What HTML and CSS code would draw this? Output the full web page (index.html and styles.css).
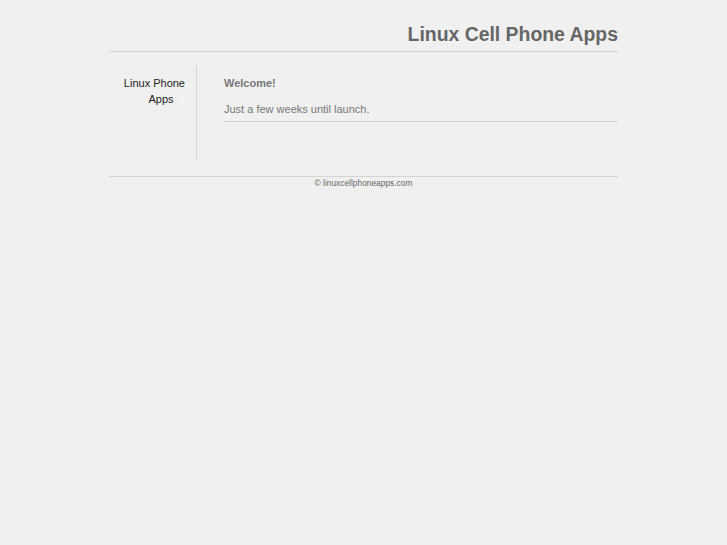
FILE: index.html
```html
<!DOCTYPE html>
<html>
<head>
<meta charset="utf-8">
<title>Linux Cell Phone Apps</title>
<link rel="stylesheet" href="styles.css">
</head>
<body>
<div class="wrap">
  <div class="header">
    <h1 class="title">Linux Cell Phone Apps</h1>
  </div>
  <div class="main">
    <div class="sidebar">
      <p class="nav">Linux Phone <span class="navline">Apps <span class="arrow">&lt;</span></span></p>
    </div>
    <div class="content">
      <h2 class="welcome">Welcome!</h2>
      <p class="intro">Just a few weeks until launch.</p>
    </div>
  </div>
  <div class="footer">© linuxcellphoneapps.com</div>
</div>
</body>
</html>
```
FILE: styles.css
```css
body {
  margin: 0;
  background: #f0f0f0;
  font-family: "Liberation Sans", Arial, sans-serif;
}
.wrap {
  width: 509px;
  margin: 0 auto;
}
.header {
  border-bottom: 1px solid #d4d4d4;
  padding-top: 22px;
  height: 29px;
  box-sizing: content-box;
}
.title {
  margin: 0;
  text-align: right;
  font-size: 19.4px;
  line-height: 24px;
  font-weight: bold;
  color: #666;
}
.main {
  display: flex;
  margin-top: 13px;
}
.sidebar {
  width: 76px;
  height: 95px;
  padding-right: 11px;
  border-right: 1px solid #d4d4d4;
  text-align: right;
}
.nav {
  margin: 10px 0 0;
  font-size: 11px;
  line-height: 16px;
  color: #222;
}
.navline {
  white-space: nowrap;
}
.arrow {
  color: #fafafa;
  font-size: 11px;
  margin-left: 2px;
}
.content {
  flex: 1;
  padding-left: 27px;
}
.welcome {
  margin: 11px 0 0;
  font-size: 11px;
  line-height: 14px;
  font-weight: bold;
  color: #777;
}
.intro {
  margin: 12px 0 0;
  padding-bottom: 5px;
  border-bottom: 1px solid #d4d4d4;
  font-size: 11px;
  line-height: 14px;
  color: #777;
}
.footer {
  margin-top: 16px;
  border-top: 1px solid #d4d4d4;
  text-align: center;
  font-size: 8.4px;
  line-height: 12px;
  color: #666;
}
```
